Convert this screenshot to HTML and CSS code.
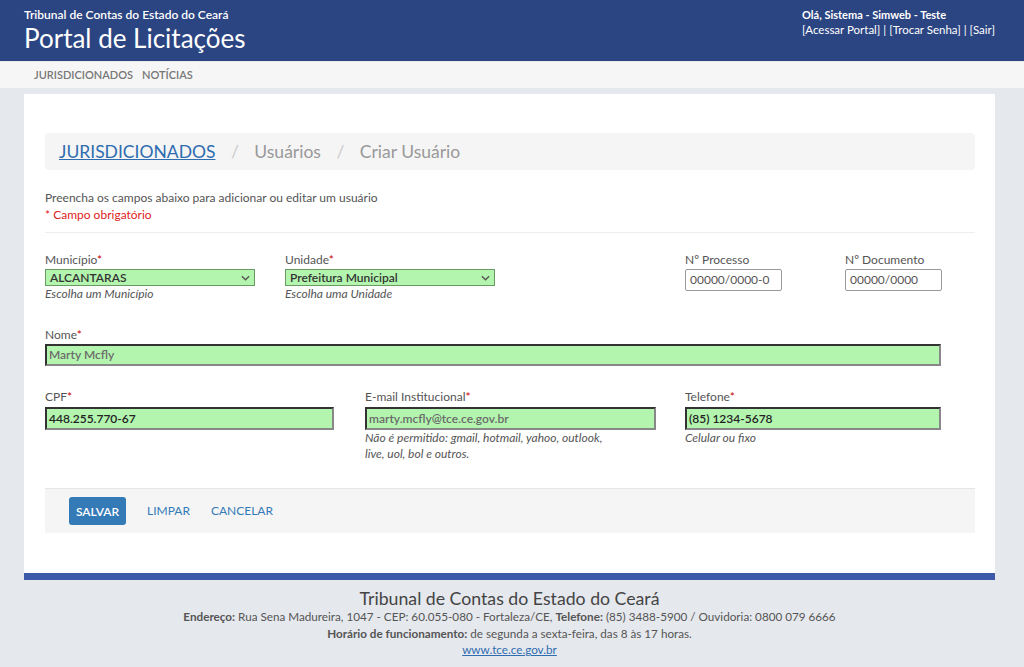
FILE: index.html
```html
<!DOCTYPE html>
<html lang="pt-BR">
<head>
<meta charset="utf-8">
<title>Portal de Licitações</title>
<link rel="stylesheet" href="styles.css">
</head>
<body>
<header class="topbar">
  <div class="brand">
    <div class="brand-sub">Tribunal de Contas do Estado do Ceará</div>
    <div class="brand-title">Portal de Licitações</div>
  </div>
  <div class="user">
    <div class="user-name">Olá, Sistema - Simweb - Teste</div>
    <div class="user-links"><a href="#">[Acessar Portal]</a> | <a href="#">[Trocar Senha]</a> | <a href="#">[Sair]</a></div>
  </div>
</header>
<nav class="menu">
  <a href="#">JURISDICIONADOS</a>
  <a href="#">NOTÍCIAS</a>
</nav>
<main class="card">
  <div class="crumbs">
    <a href="#" class="crumb-link">JURISDICIONADOS</a>
    <span class="sep">/</span>
    <span class="crumb">Usuários</span>
    <span class="sep">/</span>
    <span class="crumb">Criar Usuário</span>
  </div>
  <p class="intro">Preencha os campos abaixo para adicionar ou editar um usuário</p>
  <p class="required">* Campo obrigatório</p>
  <hr class="divider">
  <form class="form">
    <div class="row row1">
      <div class="field span3">
        <label class="lbl">Município<span class="star">*</span></label>
        <div class="select w210"><span>ALCANTARAS</span><svg viewBox="0 0 10 6" class="caret"><path d="M1 1l4 4 4-4" fill="none" stroke="#555" stroke-width="1.5"/></svg></div>
        <div class="help">Escolha um Município</div>
      </div>
      <div class="field span5">
        <label class="lbl">Unidade<span class="star">*</span></label>
        <div class="select w210"><span>Prefeitura Municipal</span><svg viewBox="0 0 10 6" class="caret"><path d="M1 1l4 4 4-4" fill="none" stroke="#555" stroke-width="1.5"/></svg></div>
        <div class="help">Escolha uma Unidade</div>
      </div>
      <div class="field span2">
        <label class="lbl">Nº Processo</label>
        <div class="plain">00000/0000-0</div>
      </div>
      <div class="field span2">
        <label class="lbl">Nº Documento</label>
        <div class="plain">00000/0000</div>
      </div>
    </div>
    <div class="row row2">
      <div class="field span12">
        <label class="lbl">Nome<span class="star">*</span></label>
        <div class="green w896 muted">Marty Mcfly</div>
      </div>
    </div>
    <div class="row row3">
      <div class="field span4">
        <label class="lbl">CPF<span class="star">*</span></label>
        <div class="green w289 dark">448.255.770-67</div>
      </div>
      <div class="field span4">
        <label class="lbl">E-mail Institucional<span class="star">*</span></label>
        <div class="green w291 muted">marty.mcfly@tce.ce.gov.br</div>
        <div class="help">Não é permitido: gmail, hotmail, yahoo, outlook,<br>live, uol, bol e outros.</div>
      </div>
      <div class="field span4">
        <label class="lbl">Telefone<span class="star">*</span></label>
        <div class="green w256 dark">(85) 1234-5678</div>
        <div class="help">Celular ou fixo</div>
      </div>
    </div>
  </form>
  <div class="actions">
    <button class="btn-primary" type="button">SALVAR</button>
    <a href="#" class="btn-link">LIMPAR</a>
    <a href="#" class="btn-link">CANCELAR</a>
  </div>
</main>
<footer class="footer">
  <div class="foot-title">Tribunal de Contas do Estado do Ceará</div>
  <div class="foot-line"><b>Endereço:</b> Rua Sena Madureira, 1047 - CEP: 60.055-080 - Fortaleza/CE, <b>Telefone:</b> (85) 3488-5900 / Ouvidoria: 0800 079 6666</div>
  <div class="foot-line"><b>Horário de funcionamento:</b> de segunda a sexta-feira, das 8 às 17 horas.</div>
  <div class="foot-line"><a href="#">www.tce.ce.gov.br</a></div>
</footer>
</body>
</html>
```

FILE: styles.css
```css
* { box-sizing: border-box; }
html, body { margin: 0; padding: 0; }
body {
  background: #e5e8ed;
  font-family: Lato, "Open Sans", "Liberation Sans", sans-serif;
  color: #555;
  font-size: 12px;
}
a { text-decoration: none; }

.topbar {
  height: 61px;
  background: #2b4482;
  color: #fff;
  display: flex;
  justify-content: space-between;
  padding: 0 29px 0 24px;
}
.brand-sub { font-size: 12px; font-weight: 600; margin-top: 8px; line-height: 14px; }
.brand-title { font-size: 26px; line-height: 30px; margin-top: 1px; }
.user { padding-top: 7px; font-size: 11px; line-height: 15px; white-space: nowrap; }
.user-name { font-weight: 700; }
.user-links { font-size: 11.5px; }
.user-links a { color: #fff; }

.menu {
  height: 27px;
  background: #f6f6f6;
  border-top: 1px solid #e8e8e8;
  padding: 6px 0 0 34px;
  display: flex;
  gap: 9px;
}
.menu a { color: #777; font-weight: 600; font-size: 11px; }

.card {
  margin: 6px 29px 0 24px;
  background: #fff;
  height: 479px;
  padding: 39px 20px 0 21px;
}
.crumbs {
  height: 37px;
  background: #f5f5f5;
  border-radius: 4px;
  padding: 6px 14px;
  font-size: 17.5px;
  line-height: 25px;
}
.crumb-link { color: #2f6db0; text-decoration: underline; }
.sep { color: #ccc; margin: 0 11px; }
.crumb { color: #999; }

.intro { margin: 19px 0 0; line-height: 17px; }
.required { margin: 0; line-height: 17px; color: #d22; }
.divider { border: 0; border-top: 1px solid #eee; margin: 9px 0 0; }

.form { margin-top: 20px; }
.row { display: grid; grid-template-columns: repeat(12, 80px); align-items: start; }
.row2 { margin-top: 26px; }
.row3 { margin-top: 24px; }
.span2 { grid-column: span 2; }
.span3 { grid-column: span 3; }
.span4 { grid-column: span 4; }
.span5 { grid-column: span 5; }
.span12 { grid-column: span 12; }

.lbl { display: block; line-height: 14px; margin-bottom: 2px; color: #555; }
.star { color: #c00; }
.row3 .lbl { margin-bottom: 3px; }

.select {
  height: 17px;
  background: #b3f5ae;
  border: 1px solid #6a9a62;
  display: flex;
  align-items: center;
  justify-content: space-between;
  padding: 0 4px 0 4px;
  color: #333;
  font-weight: 600;
}
.caret { width: 9px; height: 6px; }
.w210 { width: 210px; }
.help { font-style: italic; line-height: 16px; color: #555; }

.plain {
  width: 97px;
  height: 22px;
  border: 1px solid #999;
  border-radius: 2px;
  padding: 0 4px;
  line-height: 20px;
  color: #555;
}
.green {
  height: 22px;
  background: #b3f5ae;
  border: 2px solid #333;
  border-right-color: #888;
  border-bottom-color: #888;
  padding: 0 2px;
  line-height: 18px;
  font-weight: 600;
}
.row3 .green { height: 23px; line-height: 19px; }
.muted { color: #6a6a6a; }
.dark { color: #222; }
.w896 { width: 896px; }
.w289 { width: 289px; }
.w291 { width: 291px; }
.w256 { width: 256px; }

.actions {
  margin-top: 26px;
  height: 45px;
  background: #f5f5f5;
  border-top: 1px solid #e5e5e5;
  padding: 8px 0 0 24px;
  display: flex;
  align-items: flex-start;
}
.btn-primary {
  width: 57px;
  height: 28px;
  background: #337ab7;
  border: 0;
  border-radius: 3px;
  color: #fff;
  font-family: inherit;
  font-size: 12px;
  font-weight: 600;
  padding: 0;
}
.btn-link { color: #337ab7; line-height: 28px; margin-left: 21px; }

.footer {
  margin: 0 29px 0 24px;
  border-top: 7px solid #3d5aa8;
  text-align: center;
  padding-top: 10px;
}
.foot-title { font-size: 17.7px; line-height: 18px; color: #444; }
.foot-line { line-height: 16.5px; color: #555; font-size: 11.7px; }
.foot-line b { font-weight: 700; }
.foot-line a { color: #2f6db0; text-decoration: underline; }
```
